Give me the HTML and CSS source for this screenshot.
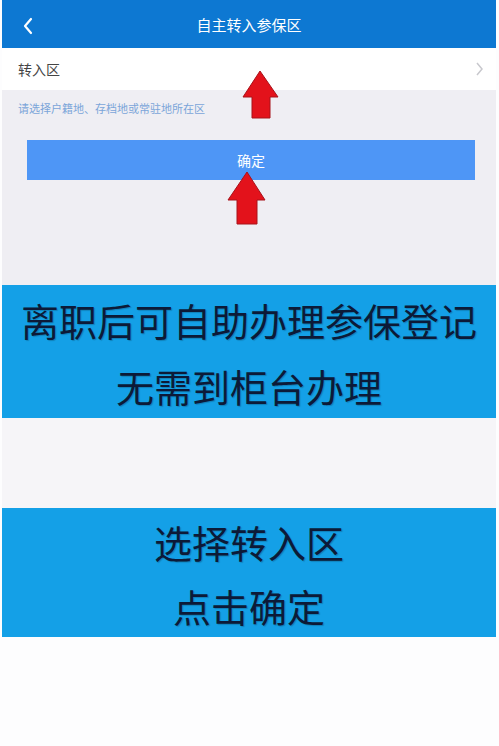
FILE: index.html
```html
<!DOCTYPE html>
<html>
	<head>
		<meta charset="UTF-8">
		<title>自主转入参保区</title>
		<link rel="stylesheet" href="styles.css">
	</head>
	<body>
		<div class="page">
			<div class="header">
				<span class="back">
					<svg width="12" height="18" viewBox="0 0 12 18"><path d="M9 2 L3 9 L9 16" fill="none" stroke="#fff" stroke-width="2.2" stroke-linecap="round" stroke-linejoin="round"/></svg>
				</span>
				<span class="title">自主转入参保区</span>
			</div>
			<div class="row">
				<span>转入区</span>
				<svg width="9" height="14" viewBox="0 0 9 14"><path d="M2 1 L7 7 L2 13" fill="none" stroke="#c8c8cd" stroke-width="1.5"/></svg>
			</div>
			<div class="gray">
				<p class="hint">请选择户籍地、存档地或常驻地所在区</p>
				<div class="btn">确定</div>
			</div>
			<div class="banner one">
				<p>离职后可自助办理参保登记</p>
				<p>无需到柜台办理</p>
			</div>
			<div class="gap"></div>
			<div class="banner two">
				<p>选择转入区</p>
				<p>点击确定</p>
			</div>
			<div class="bottom"></div>
		</div>
		<svg class="arrows" width="499" height="746" viewBox="0 0 499 746">
			<polygon points="260,71 278,97 270,97 270,118 252,118 252,97 243,97" fill="#e3121b" stroke="#a8121a" stroke-width="1"/>
			<polygon points="247,172 265,200 257,200 257,224 237,224 237,200 228,200" fill="#e3121b" stroke="#a8121a" stroke-width="1"/>
		</svg>
	</body>
</html>
```

FILE: styles.css
```css
body{
	margin: 0;
	background: #fdfdfe;
	font-family: "Noto Sans CJK SC", "Noto Sans", sans-serif;
}
p{
	margin: 0;
}
.page{
	width: 494px;
	margin-left: 2px;
}
.header{
	height: 48px;
	background: #0d78d2;
	display: flex;
	align-items: center;
	justify-content: center;
	position: relative;
}
.header .back{
	position: absolute;
	left: 20px;
	top: 16px;
}
.header .title{
	color: #fff;
	font-size: 15px;
}
.row{
	height: 42px;
	background: #fff;
	display: flex;
	align-items: center;
	justify-content: space-between;
	padding: 0 12px 0 16px;
	font-size: 14px;
	color: #444;
}
.gray{
	background: #efeef3;
	height: 195px;
	padding-top: 10px;
	box-sizing: border-box;
}
.hint{
	font-size: 11px;
	line-height: 16px;
	color: #7ba5d9;
	padding-left: 16px;
}
.btn{
	margin: 24px 21px 0 25px;
	height: 40px;
	line-height: 40px;
	background: #4e96f6;
	color: #fff;
	text-align: center;
	font-size: 14px;
}
.banner{
	background: #14a0e7;
	text-align: center;
	color: #0c1a38;
	font-size: 38px;
	font-weight: 400;
	text-shadow: 1px 1px 1px rgba(0,0,0,0.2);
}
.banner.one{
	padding-top: 2px;
	line-height: 66px;
	height: 133px;
	box-sizing: border-box;
}
.banner.two{
	padding-top: 2px;
	line-height: 64px;
	height: 129px;
	box-sizing: border-box;
	overflow: hidden;
}
.gap{
	height: 90px;
	background: #f6f5f8;
}
.bottom{
	height: 109px;
	background: #fdfdfe;
}
.arrows{
	position: absolute;
	left: 0;
	top: 0;
	pointer-events: none;
}
```
